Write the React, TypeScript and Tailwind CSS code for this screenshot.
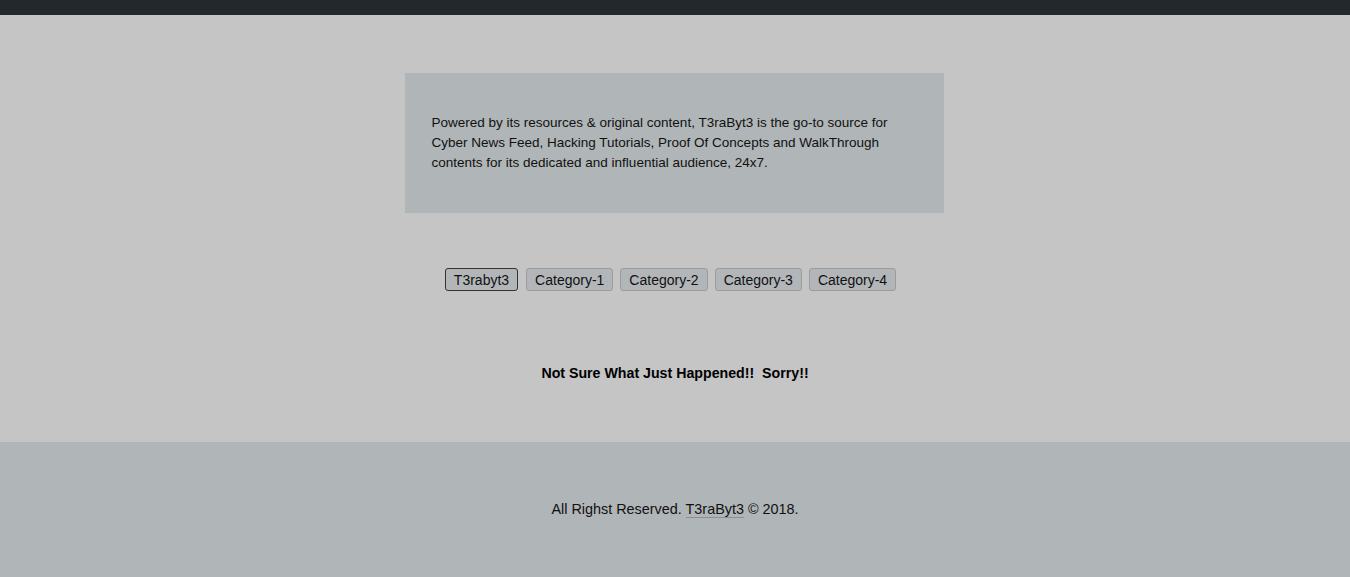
const categories = ["Category-1", "Category-2", "Category-3", "Category-4"];

export default function App() {
  return (
    <div className="min-h-[577px] flex flex-col bg-[#c5c5c5] text-[14px] leading-5 text-[#111] font-['Liberation_Sans',Arial,sans-serif]">
      <div className="h-[15px] bg-[#23282c]" />

      <main className="flex flex-col items-center pt-[58px] pb-[59px]">
        <div className="w-[539px] h-[140px] -translate-x-px bg-[#b0b5b7] px-[27px] py-[40px] text-[13.5px]">
          <p>
            Powered by its resources &amp; original content, T3raByt3 is the go-to source for Cyber News Feed,
            Hacking Tutorials, Proof Of Concepts and WalkThrough contents for its dedicated and influential
            audience, 24x7.
          </p>
        </div>

        <div className="mt-[55px] flex justify-center -translate-x-px">
          <button className="mr-2 h-[23px] px-2 rounded-[3px] border border-[#333] bg-[#b3b6b8] leading-[22px]">
            T3rabyt3
          </button>
          {categories.map((c) => (
            <button
              key={c}
              className="mr-[7px] h-[23px] px-2 rounded-[3px] border border-[#9a9c9e] bg-[#b3b6b8] leading-[22px]"
            >
              {c}
            </button>
          ))}
        </div>

        <h3 className="mt-[72px] font-bold text-black text-[14.2px]">Not Sure What Just Happened!!&nbsp; Sorry!!</h3>
      </main>

      <footer className="flex-1 bg-[#b0b5b7] pt-[57px] pb-[58px] text-center text-[14.4px]">
        All Righst Reserved.{" "}
        <a className="border-b border-[#8a8f92]">T3raByt3</a> &copy; 2018.
      </footer>
    </div>
  );
}
